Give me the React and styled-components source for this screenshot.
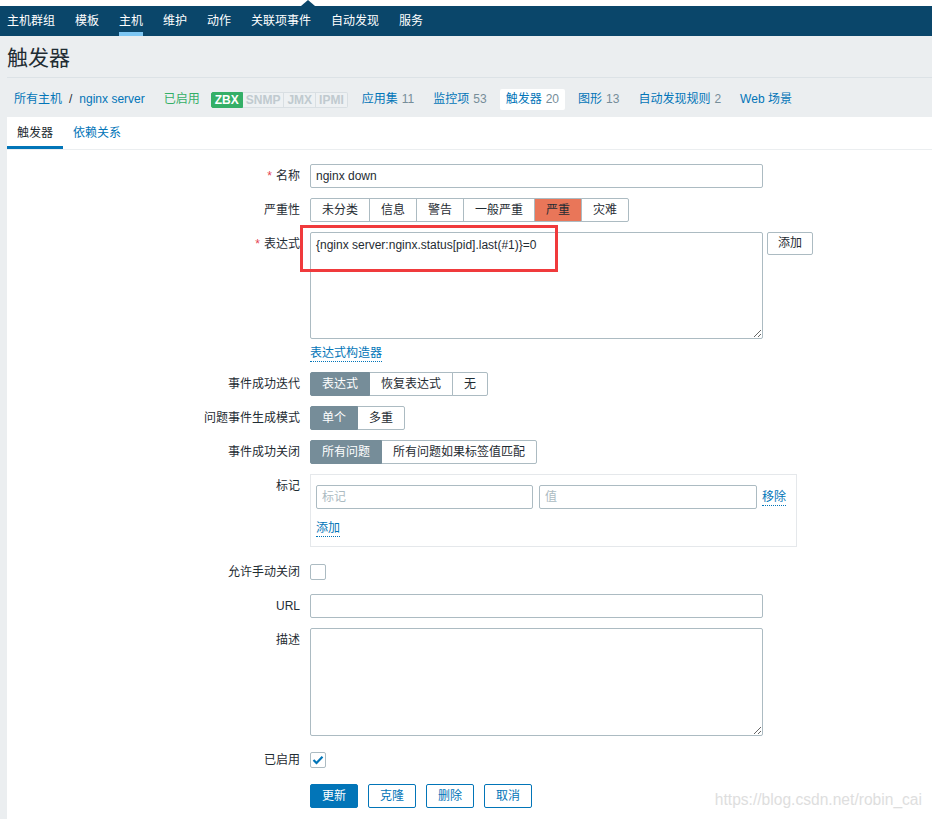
import React from 'react';
import styled, { createGlobalStyle } from 'styled-components';

const GlobalStyle = createGlobalStyle`
  html, body { margin: 0; padding: 0; }
  body {
    background: #ebeef0;
    font-family: "Liberation Sans", Arial, "Noto Sans CJK SC", sans-serif;
    font-size: 12px;
    color: #1f2c33;
  }
  *, *::before, *::after { box-sizing: border-box; }
`;

const FONT = `"Liberation Sans", Arial, "Noto Sans CJK SC", sans-serif`;

const Page = styled.div`
  position: relative;
  min-height: 819px;
  overflow: hidden;
`;

const TopStrip = styled.div`
  height: 6px;
  background: #fff;
`;

const NavBar = styled.nav`
  position: relative;
  height: 30px;
  background: #0a466a;
  display: flex;
  gap: 20px;
  padding-left: 7px;
  &::before {
    content: '';
    position: absolute;
    left: 301px;
    top: -6px;
    border-left: 7px solid transparent;
    border-right: 7px solid transparent;
    border-bottom: 6px solid #0a466a;
  }
`;

const NavItem = styled.a`
  color: #fff;
  height: 30px;
  line-height: 30px;
  text-decoration: none;
  box-shadow: ${(p) => (p.$active ? 'inset 0 -4px 0 #7dc6f3' : 'none')};
`;

const Header = styled.header`
  margin-left: 7px;
  padding: 10px 0 7px;
  border-bottom: 1px solid #dce2e6;
`;

const Title = styled.h1`
  margin: 0;
  font-size: 21px;
  font-weight: normal;
  line-height: 24px;
  color: #1f2c33;
`;

const Crumbs = styled.ul`
  list-style: none;
  margin: 0;
  padding: 11px 0 7px 8px;
  display: flex;
  align-items: center;
  gap: 7px;
`;

const CrumbItem = styled.li`
  display: flex;
  align-items: center;
  height: 21px;
  line-height: 21px;
  padding: 0 ${(p) => (p.$bare ? 0 : 6)}px;
  margin: 0 ${(p) => (p.$bare ? 1 : 0)}px 0 ${(p) => (p.$bare ? -2 : 0)}px;
  background: ${(p) => (p.$selected ? '#fff' : 'transparent')};
  border-radius: 2px;
  white-space: nowrap;
`;

const Link = styled.a`
  color: #0275b8;
  text-decoration: none;
`;

const Count = styled.span`
  color: #768d99;
  margin-left: 4px;
`;

const Sep = styled.span`
  color: #1f2c33;
  margin: 0 7px 0 7px;
`;

const GreenText = styled.span`
  color: #34af67;
`;

const BadgeGroup = styled.span`
  display: inline-flex;
`;

const Badge = styled.span`
  display: inline-block;
  height: 16px;
  line-height: 14px;
  padding: 0 3px;
  font-weight: bold;
  font-size: 12px;
  border: 1px solid ${(p) => (p.$on ? '#34af67' : '#d9dfe3')};
  border-left-width: ${(p) => (p.$first ? 1 : 0)}px;
  background: ${(p) => (p.$on ? '#34af67' : '#eef1f3')};
  color: ${(p) => (p.$on ? '#fff' : '#c0cacf')};
  border-radius: ${(p) => (p.$first ? '2px 0 0 2px' : p.$last ? '0 2px 2px 0' : '0')};
`;

const Panel = styled.main`
  margin-left: 7px;
  background: #fff;
  min-height: 702px;
`;

const Tabs = styled.ul`
  display: flex;
  list-style: none;
  margin: 0;
  padding: 0;
  border-bottom: 1px solid #ebeef0;
`;

const Tab = styled.li`
  padding: 0 10px;
  height: 32px;
  line-height: 33px;
  color: ${(p) => (p.$active ? '#1f2c33' : '#0275b8')};
  box-shadow: ${(p) => (p.$active ? 'inset 0 -3px 0 #0275b8' : 'none')};
`;

const Form = styled.form`
  display: flex;
  flex-direction: column;
  gap: 10px;
  padding: 14px 0 20px;
`;

const Row = styled.div`
  display: grid;
  grid-template-columns: 293px 1fr;
  column-gap: 10px;
  align-items: start;
  margin-top: ${(p) => p.$mt || 0}px;
`;

const Label = styled.label`
  text-align: right;
  line-height: 24px;
  white-space: nowrap;
  color: #1f2c33;
  &::before {
    content: ${(p) => (p.$required ? "'*'" : 'none')};
    color: #e54251;
    margin-right: 4px;
  }
`;

const TextInput = styled.input`
  width: ${(p) => p.$w || 453}px;
  height: 24px;
  padding: 0 5px;
  border: 1px solid #acbbc2;
  border-radius: 2px;
  font-family: ${FONT};
  font-size: 12px;
  color: #1f2c33;
  background: #fff;
  outline: none;
  &::placeholder { color: #acbbc2; }
`;

const TextArea = styled.textarea`
  display: block;
  width: 453px;
  height: ${(p) => p.$h}px;
  padding: 5px;
  border: 1px solid #acbbc2;
  border-radius: 2px;
  font-family: ${FONT};
  font-size: 12px;
  line-height: 14px;
  color: #1f2c33;
  outline: none;
  resize: both;
`;

const Segmented = styled.div`
  display: inline-flex;
`;

const Segment = styled.span`
  height: 24px;
  line-height: 22px;
  padding: 0 11px;
  border: 1px solid ${(p) => (p.$tone === 'grey' ? '#768d99' : '#acbbc2')};
  margin-left: -1px;
  white-space: nowrap;
  position: relative;
  z-index: ${(p) => (p.$tone === 'grey' ? 1 : 0)};
  background: ${(p) => (p.$tone === 'grey' ? '#768d99' : p.$tone === 'high' ? '#e97659' : '#fff')};
  color: ${(p) => (p.$tone === 'grey' ? '#fff' : '#1f2c33')};
  &:first-child { margin-left: 0; border-radius: 2px 0 0 2px; }
  &:last-child { border-radius: 0 2px 2px 0; }
`;

const ExprWrap = styled.div`
  position: relative;
  display: flex;
  align-items: flex-start;
  gap: 4px;
`;

const Highlight = styled.div`
  position: absolute;
  left: -10px;
  top: -7px;
  width: 258px;
  height: 47px;
  border: 3px solid #f03a3c;
  pointer-events: none;
`;

const Cell = styled.div`
  display: flex;
  flex-direction: column;
  align-items: flex-start;
`;

const DotLink = styled.a`
  display: inline-block;
  margin-top: ${(p) => p.$mt || 0}px;
  margin-left: ${(p) => p.$ml || 0}px;
  line-height: 16px;
  color: #0275b8;
  text-decoration: none;
  border-bottom: 1px dotted #0275b8;
  white-space: nowrap;
`;

const SmallButton = styled.button`
  height: 23px;
  padding: 0 10px;
  border: 1px solid #acbbc2;
  border-radius: 2px;
  background: #fff;
  color: #1f2c33;
  font-family: ${FONT};
  font-size: 12px;
  line-height: 21px;
`;

const TagBox = styled.div`
  width: 487px;
  border: 1px solid #e5e8eb;
  padding: 10px 10px 9px 5px;
  display: flex;
  flex-direction: column;
  align-items: flex-start;
`;

const TagLine = styled.div`
  display: flex;
  align-items: center;
  gap: 6px;
`;

const CheckWrap = styled.div`
  height: 24px;
  display: flex;
  align-items: center;
`;

const Check = styled.span`
  width: 16px;
  height: 16px;
  border: 1px solid #acbbc2;
  border-radius: 2px;
  background: #fff;
  display: flex;
  align-items: center;
  justify-content: center;
`;

const Buttons = styled.div`
  display: flex;
  gap: 10px;
`;

const Button = styled.button`
  height: 24px;
  padding: 0 11px;
  border: 1px solid #0275b8;
  border-radius: 2px;
  background: ${(p) => (p.$primary ? '#0275b8' : '#fff')};
  color: ${(p) => (p.$primary ? '#fff' : '#0275b8')};
  font-family: ${FONT};
  font-size: 12px;
  line-height: 22px;
`;

const Watermark = styled.div`
  position: absolute;
  right: 10px;
  top: 790px;
  font-family: "Liberation Sans", Arial, sans-serif;
  font-size: 15.6px;
  line-height: 20px;
  color: #dedede;
  pointer-events: none;
`;

const navItems = ['主机群组', '模板', '主机', '维护', '动作', '关联项事件', '自动发现', '服务'];

const crumbs = [
  { label: '应用集', count: 11 },
  { label: '监控项', count: 53 },
  { label: '触发器', count: 20, selected: true },
  { label: '图形', count: 13 },
  { label: '自动发现规则', count: 2 },
  { label: 'Web 场景' },
];

const severities = ['未分类', '信息', '警告', '一般严重', '严重', '灾难'];

function CheckBox({ checked }) {
  return (
    <Check>
      {checked && (
        <svg width="12" height="10" viewBox="0 0 12 10">
          <polyline points="1.5,5 4.5,8 10.5,1.8" fill="none" stroke="#0275b8" strokeWidth="2.2" />
        </svg>
      )}
    </Check>
  );
}

export default function App() {
  return (
    <Page>
      <GlobalStyle />
      <TopStrip />
      <NavBar>
        {navItems.map((n) => (
          <NavItem key={n} $active={n === '主机'}>{n}</NavItem>
        ))}
      </NavBar>
      <Header>
        <Title>触发器</Title>
      </Header>
      <Crumbs>
        <CrumbItem>
          <Link>所有主机</Link>
          <Sep>/</Sep>
          <Link>nginx server</Link>
        </CrumbItem>
        <CrumbItem>
          <GreenText>已启用</GreenText>
        </CrumbItem>
        <CrumbItem $bare>
          <BadgeGroup>
            <Badge $on $first>ZBX</Badge>
            <Badge>SNMP</Badge>
            <Badge>JMX</Badge>
            <Badge $last>IPMI</Badge>
          </BadgeGroup>
        </CrumbItem>
        {crumbs.map((c) => (
          <CrumbItem key={c.label} $selected={c.selected}>
            <Link>{c.label}</Link>
            {c.count !== undefined && <Count>{c.count}</Count>}
          </CrumbItem>
        ))}
      </Crumbs>
      <Panel>
        <Tabs>
          <Tab $active>触发器</Tab>
          <Tab>依赖关系</Tab>
        </Tabs>
        <Form onSubmit={(e) => e.preventDefault()}>
          <Row>
            <Label $required>名称</Label>
            <TextInput defaultValue="nginx down" />
          </Row>
          <Row>
            <Label>严重性</Label>
            <Segmented>
              {severities.map((s) => (
                <Segment key={s} $tone={s === '严重' ? 'high' : undefined}>{s}</Segment>
              ))}
            </Segmented>
          </Row>
          <Row>
            <Label $required>表达式</Label>
            <Cell>
              <ExprWrap>
                <TextArea $h={107} defaultValue="{nginx server:nginx.status[pid].last(#1)}=0" />
                <SmallButton type="button">添加</SmallButton>
                <Highlight />
              </ExprWrap>
              <DotLink $mt={6}>表达式构造器</DotLink>
            </Cell>
          </Row>
          <Row>
            <Label>事件成功迭代</Label>
            <Segmented>
              <Segment $tone="grey">表达式</Segment>
              <Segment>恢复表达式</Segment>
              <Segment>无</Segment>
            </Segmented>
          </Row>
          <Row>
            <Label>问题事件生成模式</Label>
            <Segmented>
              <Segment $tone="grey">单个</Segment>
              <Segment>多重</Segment>
            </Segmented>
          </Row>
          <Row>
            <Label>事件成功关闭</Label>
            <Segmented>
              <Segment $tone="grey">所有问题</Segment>
              <Segment>所有问题如果标签值匹配</Segment>
            </Segmented>
          </Row>
          <Row>
            <Label>标记</Label>
            <TagBox>
              <TagLine>
                <TextInput $w={217} placeholder="标记" />
                <TextInput $w={218} placeholder="值" />
                <DotLink $ml={-1}>移除</DotLink>
              </TagLine>
              <DotLink $mt={11}>添加</DotLink>
            </TagBox>
          </Row>
          <Row $mt={3}>
            <Label>允许手动关闭</Label>
            <CheckWrap>
              <CheckBox />
            </CheckWrap>
          </Row>
          <Row>
            <Label>URL</Label>
            <TextInput />
          </Row>
          <Row>
            <Label>描述</Label>
            <TextArea $h={108} />
          </Row>
          <Row $mt={2}>
            <Label>已启用</Label>
            <CheckWrap>
              <CheckBox checked />
            </CheckWrap>
          </Row>
          <Row $mt={2}>
            <span />
            <Buttons>
              <Button type="button" $primary>更新</Button>
              <Button type="button">克隆</Button>
              <Button type="button">删除</Button>
              <Button type="button">取消</Button>
            </Buttons>
          </Row>
        </Form>
      </Panel>
      <Watermark>https://blog.csdn.net/robin_cai</Watermark>
    </Page>
  );
}
